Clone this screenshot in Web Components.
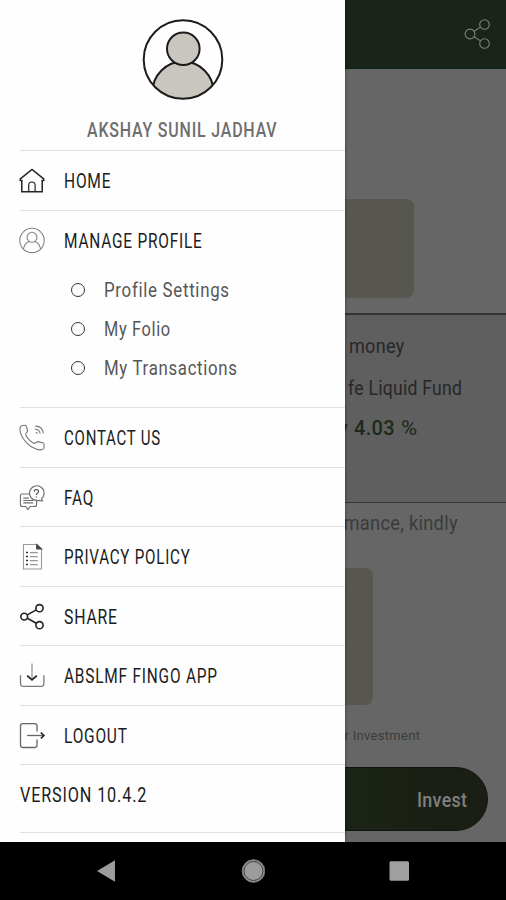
<!DOCTYPE html>
<html lang="en">
<head>
<meta charset="utf-8">
<title>Menu</title>
<style>
  body {
    margin: 0;
    width: 506px;
    height: 900px;
    overflow: hidden;
    background: #000;
    font-family: Roboto, "Liberation Sans", sans-serif;
  }
</style>
</head>
<body>
<app-screen>
  <fund-page slot="page"></fund-page>
  <side-drawer slot="drawer" name="AKSHAY SUNIL JADHAV">
    <menu-row icon="home" label="HOME" w="47" style="height:60px"></menu-row>
    <menu-row icon="user" label="MANAGE PROFILE" w="138.5" style="height:197px">
      <sub-item label="Profile Settings" w="125.5"></sub-item>
      <sub-item label="My Folio" w="67"></sub-item>
      <sub-item label="My Transactions" w="133.5"></sub-item>
    </menu-row>
    <menu-row icon="phone" label="CONTACT US" w="97"></menu-row>
    <menu-row icon="faq" label="FAQ" w="30"></menu-row>
    <menu-row icon="policy" label="PRIVACY POLICY" w="126.5"></menu-row>
    <menu-row icon="share" label="SHARE" w="53.5"></menu-row>
    <menu-row icon="download" label="ABSLMF FINGO APP" w="153.5"></menu-row>
    <menu-row icon="logout" label="LOGOUT" w="63.5"></menu-row>
    <menu-row label="VERSION 10.4.2" w="127.5" style="height:68px"></menu-row>
    <menu-row style="height:9.5px"></menu-row>
  </side-drawer>
  <nav-bar slot="nav"></nav-bar>
</app-screen>

<script>
const ICONS = {
  home: `<g stroke="#222" stroke-width="1.5"><path d="M1.3 12.6V10.8L13 1.400l11.700 9.400v1.800H23.200V23.800H2.800V12.600z"/><path d="M9.700 23.800v-6.600a3.200 3.200 0 0 1 6.400 0v6.600" stroke-width="1.200"/></g>`,
  user: `<g stroke="#858585" stroke-width="1.1"><circle cx="13" cy="12.4" r="12.2"/><circle cx="13" cy="9.3" r="5"/><path d="M4.500 21c.6-4 2.500-6.400 5.600-7.600M21.500 21c-.6-4-2.500-6.400-5.600-7.600"/></g>`,
  phone: `<g stroke="#777" stroke-width="1.100"><path d="M2 1.200C4 .2 6.300 0 7.200 1.100L8.600 5.500c.3 1.300-1.700 2.300-1.900 3.500-.3 2.500 6.300 9.200 9 9.300 1.200 0 2-2 3.400-1.700l5.200 1.400c1.300.5.800 3.500.6 5.400-.8 2.100-5 1.700-7.800.7C10 21.600 3.500 14.500 1.500 8.200.7 5.400.7 2.800 2 1.200z"/><path d="M16.200 1.200c4.300-.7 8.200 3 8.100 7.300M15.800 4.300c2.800-.3 5.300 1.800 5.300 4.500M16.700 7.300c.9 0 1.500.5 1.600 1.400"/></g>`,
  faq: `<g stroke="#6f6f6f" stroke-width="1.100"><path d="M10.300 9H3.200Q1.400 9 1.400 11v8.500q0 2 2 2h3.300l2.200 3 2.200-3h4.500q2 0 2-2V16"/><path d="M17.700 15.400a7.300 7.300 0 1 1 4.800-1.700l1 2.200z"/><path d="M4.300 13.100h5.500M4.300 15.500h9.900M4.300 17.900h9.900"/><path d="M15.200 6.600q.1-2.100 2.200-2.100t2.200 1.900c0 1.700-2.200 1.300-2.200 3.500M17.400 11.500v1" stroke="#444"/></g>`,
  policy: `<g stroke="#999" stroke-width="1.100"><path d="M17.700.500H4.500V25h18V4.900z"/><path d="M17.700.500v4.400h4.800z" fill="#444" stroke="#444"/><path d="M10.800 8.600h8M10.800 12.600h8M10.800 16.600h8M10.800 20.600h8"/><path d="M7 8.600h2M7 12.600h2M7 16.600h2M7 20.600h2" stroke="#333" stroke-width="1.500"/></g>`,
  share: `<g stroke="#222" stroke-width="1.600"><circle cx="5.200" cy="12.600" r="3.400"/><circle cx="20.500" cy="4.200" r="3.600"/><circle cx="20.500" cy="21.200" r="3.600"/><path d="m8.300 10.900 9-5M8.300 14.300l9 5"/></g>`,
  download: `<path d="M13 .500v16" stroke="#aaa" stroke-width="1.600"/><path d="m8.200 12.600 4.800 4.300 4.800-4.300" stroke="#222" stroke-width="1.800"/><path d="M1.500 12.200v8q0 3.200 3.200 3.200h17q3.200 0 3.200-3.200v-8" stroke="#777" stroke-width="1.300"/>`,
  logout: `<g stroke="#666" stroke-width="1.300"><path d="M18 8.500V3Q18 .700 15.700.700H3.800Q1.500.700 1.500 3v19q0 2.500 2.300 2.500h11.900q2.300 0 2.300-2.500v-5.500"/><path d="M8 12.500h16"/><path d="m21.800 9.600 3.200 2.900-3.200 2.900" stroke="#222" stroke-width="1.500"/></g>`
};

// Text squeezed to a given width, for a narrow DIN look
class NarrowText extends HTMLElement {
  constructor() {
    super();
    this.attachShadow({ mode: 'open' });
    this.shadowRoot.innerHTML = `
      <style>
        :host { display: block; flex: none; white-space: nowrap; }
        span { display: inline-block; transform-origin: 0 50%; letter-spacing: var(--tracking, .3px); }
      </style>
      <span><slot></slot></span>`;
  }

  connectedCallback() {
    const w = parseFloat(this.getAttribute('w'));
    const span = this.shadowRoot.querySelector('span');
    this.style.width = w + 'px';
    span.style.transform = `scaleX(${w / span.offsetWidth})`;
  }
}

class AppScreen extends HTMLElement {
  constructor() {
    super();
    this.attachShadow({ mode: 'open' });
    this.shadowRoot.innerHTML = `
      <style>
        :host { display: grid; grid-template: 842px 58px / 506px; overflow: hidden; }
        ::slotted([slot="page"]), ::slotted([slot="drawer"]) { grid-area: 1 / 1; }
        ::slotted([slot="drawer"]) { z-index: 1; }
      </style>
      <slot name="page"></slot>
      <slot name="drawer"></slot>
      <slot name="nav"></slot>`;
  }
}

class SideDrawer extends HTMLElement {
  connectedCallback() {
    this.attachShadow({ mode: 'open' });
    this.shadowRoot.innerHTML = `
      <style>
        :host {
          display: flex;
          flex-direction: column;
          width: 345px;
          height: 842px;
          box-sizing: border-box;
          padding-left: 20px;
          background: #fefefe;
          box-shadow: 0 0 3px rgba(0, 0, 0, .5);
          --tracking: 1px;
        }
        header {
          display: flex;
          flex-direction: column;
          align-items: center;
          gap: 17.5px;
          box-sizing: border-box;
          height: 150px;
          flex: none;
          padding: 19px 0 0;
          font-size: 19.5px;
          line-height: 24px;
          font-weight: 500;
          color: #6e6e6e;
        }
        svg { display: block; flex: none; }
      </style>
      <header>
        <svg width="82" height="82" viewBox="0 0 82 82" fill="#c9c5bf" stroke="#1e1a1a" stroke-width="2">
          <clipPath id="round"><circle cx="41" cy="40.500" r="39"/></clipPath>
          <circle cx="41" cy="73" r="30.500" clip-path="url(#round)"/>
          <circle cx="41.300" cy="29.700" r="16.300"/>
          <circle cx="41" cy="40.500" r="39.300" fill="none"/>
        </svg>
        <narrow-text w="190.500">${this.getAttribute('name')}</narrow-text>
      </header>
      <slot></slot>`;
  }
}

class MenuRow extends HTMLElement {
  connectedCallback() {
    const icon = this.getAttribute('icon');
    const label = this.getAttribute('label');
    this.attachShadow({ mode: 'open' });
    this.shadowRoot.innerHTML = `
      <style>
        :host {
          display: block;
          flex: none;
          box-sizing: border-box;
          height: 59.5px;
          border-top: 1px solid #e0e0e0;
          font-size: 19.5px;
          color: #1c1c1c;
        }
        .head { display: flex; align-items: center; height: 60px; gap: 19px; line-height: 24px; }
        .head narrow-text { padding-top: 2px; }
        svg { width: 26px; height: 26px; margin-left: -1px; flex: none; overflow: visible; }
        .subs { display: block; }
      </style>
      ${label ? `<div class="head">
        ${icon ? `<svg viewBox="0 0 26 26" fill="none">${ICONS[icon]}</svg>` : ''}
        <narrow-text w="${this.getAttribute('w')}">${label}</narrow-text>
      </div>` : ''}
      <slot class="subs"></slot>`;
  }
}

class SubItem extends HTMLElement {
  connectedCallback() {
    this.attachShadow({ mode: 'open' });
    this.shadowRoot.innerHTML = `
      <style>
        :host {
          display: flex;
          align-items: center;
          gap: 19.5px;
          height: 39.3px;
          padding-left: 50.5px;
          color: #565656;
          font-size: 19.5px;
          line-height: 24px;
          --tracking: .8px;
        }
        i { width: 12px; height: 12px; margin-bottom: 2px; border: 1.5px solid #333; border-width: 1.500px; border-radius: 50%; }
      </style>
      <i></i>
      <narrow-text w="${this.getAttribute('w')}">${this.getAttribute('label')}</narrow-text>`;
  }
}

class FundPage extends HTMLElement {
  constructor() {
    super();
    this.attachShadow({ mode: 'open' });
    this.shadowRoot.innerHTML = `
      <style>
        :host {
          display: flex;
          flex-direction: column;
          width: 506px;
          height: 842px;
          background: #666;
          font-size: 19.5px;
          line-height: 24px;
          color: #272727;
        }
        header {
          display: flex;
          justify-content: flex-end;
          align-items: center;
          box-sizing: border-box;
          height: 69px;
          padding-right: 15px;
          background: #1a2418;
          border-bottom: 1px solid #102412;
        }
        .card { background: #57574f; border-radius: 8px; }
        .one { width: 322px; height: 99px; margin: 130px 0 15px 92px; }
        .two { width: 240px; height: 137px; margin: 32px 0 19px 133px; }
        section {
          box-sizing: border-box;
          height: 190px;
          padding-top: 20px;
          background: #5f5f5f;
          border: solid #343434;
          border-width: 2px 0 1px;
        }
        .line { display: flex; justify-content: flex-end; }
        .fund { padding: 18px 44px 16px 0; }
        .rate { padding-right: 88px; gap: 6px; color: #1a2a1a; font-weight: 500; }
        .note { padding: 9px 48px 0 0; color: #3b3b3b; }
        .small { padding-right: 85.500px; font-size: 13px; color: #3c3c3c; }
        .invest {
          display: flex;
          justify-content: flex-end;
          align-items: center;
          box-sizing: border-box;
          width: 469px;
          height: 64px;
          margin: 19px 0 0 18.500px;
          padding: 3px 19px 0 0;
          border-radius: 32px;
          border: 1px solid #10140e;
          background: linear-gradient(90deg, #1b2819 60%, #1b1e14 90%);
          color: #808080;
          font-weight: 500;
        }
      </style>
      <header>
        <svg width="28" height="32" viewBox="0 0 28 32" fill="none" stroke="#7c817b" stroke-width="1.100">
          <circle cx="7" cy="16" r="4.900"/><circle cx="21.500" cy="6.500" r="4.800"/><circle cx="21.500" cy="25.500" r="4.800"/>
          <path d="m11 13.300 6.500-4.200M11 18.700l6.500 4.200"/>
        </svg>
      </header>
      <div class="card one"></div>
      <section>
        <div class="line" style="padding-right:102px"><narrow-text w="55.500">money</narrow-text></div>
        <div class="line fund"><narrow-text w="114.500">fe Liquid Fund</narrow-text></div>
        <div class="line rate">
          <narrow-text w="9">y</narrow-text><narrow-text w="41">4.03</narrow-text><narrow-text w="17" style="font-weight:400">%</narrow-text>
        </div>
      </section>
      <div class="line note"><narrow-text w="121">rmance, kindly</narrow-text></div>
      <div class="card two"></div>
      <div class="line small"><narrow-text w="76">r Investment</narrow-text></div>
      <div class="invest"><narrow-text w="50.500">Invest</narrow-text></div>`;
  }
}

class NavBar extends HTMLElement {
  constructor() {
    super();
    this.attachShadow({ mode: 'open' });
    this.shadowRoot.innerHTML = `
      <style>
        :host { display: flex; align-items: center; justify-content: space-between; padding: 0 96px; background: #000; z-index: 2; }
        svg { display: block; }
      </style>
      <svg width="20" height="24" viewBox="0 0 20 24"><path d="M1 12 19 1.200v21.600z" fill="#9c9c9c"/></svg>
      <svg width="26" height="26" viewBox="-1.500 0 26 26"><circle cx="13" cy="13" r="11.300" fill="#9c9c9c" stroke="#777"/><circle cx="13" cy="13" r="9.500" fill="none" stroke="#3c3c3c"/></svg>
      <svg width="22" height="22" viewBox="0 0 22 22"><rect x="1.500" y="1.300" width="19.500" height="19.500" rx="1.500" fill="#9f9f9f"/></svg>`;
  }
}

customElements.define('narrow-text', NarrowText);
customElements.define('app-screen', AppScreen);
customElements.define('side-drawer', SideDrawer);
customElements.define('menu-row', MenuRow);
customElements.define('sub-item', SubItem);
customElements.define('fund-page', FundPage);
customElements.define('nav-bar', NavBar);
</script>
</body>
</html>
